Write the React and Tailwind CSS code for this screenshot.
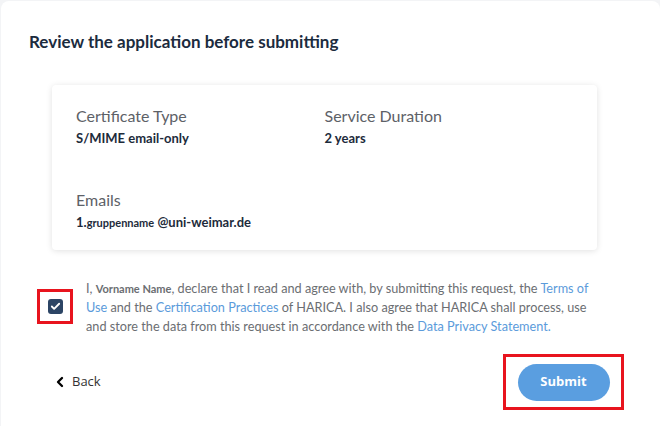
import { ChevronLeft, Check } from "lucide-react";

const lato = { fontFamily: "Lato, 'Open Sans', sans-serif" };

function Field({ label, children }) {
  return (
    <div>
      <p className="text-[16px] leading-5 text-[#5d6167]">{label}</p>
      <p className="mt-[2px] text-[13px] leading-5 font-bold text-[#1d2b3b]">{children}</p>
    </div>
  );
}

export default function App() {
  return (
    <div className="h-[426px] w-[660px] overflow-hidden bg-[#f3f4f6] pl-px pt-px" style={lato}>
      <div className="h-[440px] rounded-lg bg-white">
        <h1 className="px-7 pt-[30px] text-[17px] leading-[22px] font-bold text-[#1b2b3e]">
          Review the application before submitting
        </h1>

        <section className="ml-[51px] mt-[32px] w-[545px] rounded-sm bg-white px-6 pt-[21px] pb-[17px] shadow-[0_1px_6px_rgba(0,0,0,0.12)]">
          <div className="grid grid-cols-2">
            <Field label="Certificate Type">S/MIME email-only</Field>
            <Field label="Service Duration">2 years</Field>
          </div>
          <div className="mt-[42px]">
            <Field label="Emails">
              1.<span className="text-[11px]">gruppenname</span> @uni-weimar.de
            </Field>
          </div>
        </section>

        <div className="mt-[29px] flex items-start">
          <div className="ml-[36px] mt-[10px] flex h-[35px] w-[36px] items-center justify-center border-[3px] border-[#e8141e]">
            <span className="flex h-[15px] w-[15px] items-center justify-center rounded-[3px] bg-[#2c4565]">
              <Check className="h-[11px] w-[11px] text-white" strokeWidth={4} />
            </span>
          </div>
          <p className="ml-[13px] w-[512px] text-[12.7px] leading-[19px] text-[#6b6e72]">
            I, <span className="text-[11px] font-bold text-[#6b6e72]">Vorname Name</span>, declare that I read and agree with, by submitting this request, the{" "}
            <a className="text-[#5b9bdb]">Terms of Use</a> and the{" "}
            <a className="text-[#5b9bdb]">Certification Practices</a> of HARICA. I also agree that HARICA shall process, use and store the data from this request in accordance with the{" "}
            <a className="text-[#5b9bdb]">Data Privacy Statement.</a>
          </p>
        </div>

        <div className="mt-[18px] flex items-center justify-between pl-[51px] pr-[36px]" style={{ fontFamily: "'Open Sans', sans-serif" }}>
          <button className="flex items-center gap-[4px] text-[13px] text-[#333]" type="button">
            <ChevronLeft className="h-[16px] w-[16px] text-black" strokeWidth={3.5} />
            Back
          </button>
          <div className="flex h-[56px] w-[121px] items-center justify-center border-[3px] border-[#e8141e]">
            <button className="h-[37px] w-[92px] rounded-full bg-[#5a9ee0] text-[13px] font-bold text-white" type="button">
              Submit
            </button>
          </div>
        </div>
      </div>
    </div>
  );
}
